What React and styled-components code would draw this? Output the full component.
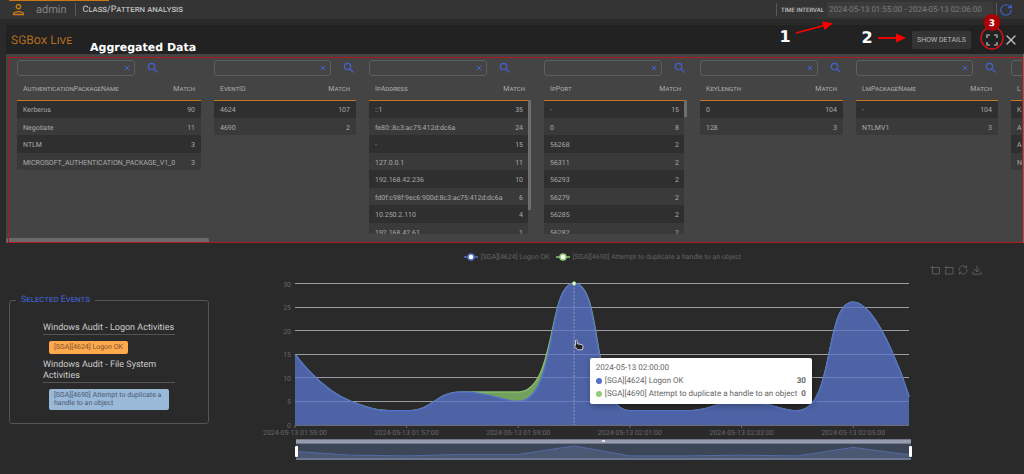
import React, { useState } from 'react';
import styled, { createGlobalStyle } from 'styled-components';
import { MdOutlinePerson, MdSearch } from 'react-icons/md';
import { RotateCw, X } from 'lucide-react';

const columns = [
    { name: 'AuthenticationPackageName', width: 184, rows: [['Kerberos', 90], ['Negotiate', 11], ['NTLM', 3], ['MICROSOFT_AUTHENTICATION_PACKAGE_V1_0', 3]] },
    { name: 'EventID', width: 142, rows: [['4624', 107], ['4690', 2]] },
    {
        name: 'IpAddress', width: 162, thumb: 110,
        rows: [['::1', 35], ['fe80::8c3:ac75:412d:dc6a', 24], ['-', 15], ['127.0.0.1', 11], ['192.168.42.236', 10], ['fd0f:c98f:9ec6:900d:8c3:ac75:412d:dc6a', 6], ['10.250.2.110', 4], ['192.168.42.61', 1]],
    },
    {
        name: 'IpPort', width: 143, thumb: 17,
        rows: [['-', 15], ['0', 8], ['56268', 2], ['56311', 2], ['56293', 2], ['56279', 2], ['56285', 2], ['56282', 2]],
    },
    { name: 'KeyLength', width: 143, rows: [['0', 104], ['128', 3]] },
    { name: 'LmPackageName', width: 142, rows: [['-', 104], ['NTLMV1', 3]] },
    { name: 'L', width: 142, rows: [['K', ''], ['A', ''], ['A', ''], ['N', '']] },
]

const logonValues = [15, 5, 3, 7, 5, 30, 3, 3, 5, 3, 26, 6]
const totalValues = [15, 5, 3, 7, 7, 30, 3, 3, 5, 3, 26, 6]
const timeLabels = ['2024-05-13 01:55:00', '2024-05-13 01:57:00', '2024-05-13 01:59:00', '2024-05-13 02:01:00', '2024-05-13 02:03:00', '2024-05-13 02:05:00']

// plot area inside the 804x198 viewBox
const LEFT = 75;
const RIGHT = 689;
const BASE = 149;
const STEP = (RIGHT - LEFT) / 11;
const UNIT = 141.5 / 30;

const toPoints = (values, unit, base) => values.map((v, i) => [LEFT + i * STEP, base - v * unit]);
const gridY = (v) => Math.floor(BASE - v * UNIT) + 0.5;

const clamp = (v, a, b) => Math.max(Math.min(v, Math.max(a, b)), Math.min(a, b));

// smooth line whose control points never leave the box of their segment
function smoothPath(points) {
    let d = `M${points[0][0]},${points[0][1]}`;
    let out = points[0];
    for (let i = 1; i < points.length; i++) {
        const [x, y] = points[i];
        const prev = points[i - 1];
        const next = points[i + 1];
        let cp = [x, y];
        let nextOut = [x, y];
        if (next) {
            const lenPrev = Math.hypot(x - prev[0], y - prev[1]);
            const lenNext = Math.hypot(next[0] - x, next[1] - y);
            const ratio = lenNext / (lenPrev + lenNext);
            nextOut = [0, 1].map((k) => clamp(points[i][k] + (next[k] - prev[k]) * 0.5 * ratio, points[i][k], next[k]));
            cp = [0, 1].map((k) => clamp(points[i][k] - (nextOut[k] - points[i][k]) * lenPrev / lenNext, prev[k], points[i][k]));
            nextOut = [0, 1].map((k) => points[i][k] + (points[i][k] - cp[k]) * lenNext / lenPrev);
        }
        d += ` C${out[0]},${out[1]} ${cp[0]},${cp[1]} ${x},${y}`;
        out = nextOut;
    }
    return d;
}

function EventsChart() {
    const logon = smoothPath(toPoints(logonValues, UNIT, BASE));
    const total = smoothPath(toPoints(totalValues, UNIT, BASE));
    const overview = toPoints(totalValues, 0.37, 181).map((p) => p.join(',')).join(' L');
    const peak = LEFT + 5 * STEP;

    return (
        <ChartSvg viewBox="0 0 804 198" role="img" aria-label="Events over time">
            {[0, 5, 10, 15, 20, 25, 30].map((v) => (
                <g key={v}>
                    <line x1={LEFT} x2={RIGHT} y1={gridY(v)} y2={gridY(v)} stroke={v ? '#9c9ca4' : '#6b6b73'} />
                    <text x="71" y={BASE - v * UNIT + 3} textAnchor="end">{v}</text>
                </g>
            ))}
            <path d={`${total} V${BASE} H${LEFT} Z`} fill="#73a05f" />
            <path d={total} fill="none" stroke="#86bb6c" strokeWidth="1.5" />
            <path d={`${logon} V${BASE} H${LEFT} Z`} fill="#4d63a6" />
            <path d={logon} fill="none" stroke="#5470c6" strokeWidth="1.5" />
            {/* the grid shows faintly through the filled area */}
            <clipPath id="area"><path d={`${logon} V${BASE} H${LEFT} Z`} /></clipPath>
            <g clipPath="url(#area)" stroke="#7e8fcc" strokeOpacity="0.6">
                {[5, 10, 15, 20, 25].map((v) => (
                    <line key={v} x1={LEFT} x2={RIGHT} y1={gridY(v)} y2={gridY(v)} />
                ))}
            </g>
            <line x1={peak} x2={peak} y1="8" y2={BASE} stroke="#8e98b8" strokeDasharray="2 1.5" />
            <circle cx={peak} cy="7.5" r="1.8" fill="#fff" stroke="#91cc75" />
            {timeLabels.map((label, i) => (
                <g key={label}>
                    <line x1={LEFT + i * 2 * STEP} x2={LEFT + i * 2 * STEP} y1="149" y2="152" stroke="#6b6b73" />
                    <text x={LEFT + i * 2 * STEP} y="159" textAnchor="middle">{label}</text>
                </g>
            ))}
            <path d="M355.500 64.500q1-1 1.700.2v3l4.800 1q1.200.4 1 1.800l-.7 3.300h-4.600l-3.400-3.800q.2-1 1.200-.6Z" fill="#222" stroke="#eee" strokeWidth="0.8" />
            <rect x="76" y="163" width="615" height="21" fill="#3d4656" />
            <path d={`M${overview} V182 H${LEFT + 1} Z`} fill="#4b5873" />
            <path d={`M${overview}`} fill="none" stroke="#536ba4" />
            <rect x="76" y="163" width="615" height="5" fill="#979dad" />
            <rect x="76" y="163" width="615" height="1" fill="#70788a" />
            <rect x="76" y="167" width="615" height="1" fill="#737b91" />
            <rect x="382" y="164" width="3" height="2" fill="#e4e6ea" />
            <rect x="76" y="182" width="615" height="2" fill="#6a758f" />
            <rect x="75" y="170" width="3" height="11" rx="1" fill="#fff" />
            <rect x="689" y="170" width="3" height="11" rx="1" fill="#fff" />
        </ChartSvg>
    )
}

function ValueColumn({ name, width, rows, thumb }) {
    const [query, setQuery] = useState('')

    return (
        <Column $width={width}>
            <SearchRow>
                <SearchField>
                    <SearchInput aria-label={`Filter ${name}`} value={query} onChange={(e) => setQuery(e.target.value)} />
                    <ClearButton aria-label={`Clear ${name}`} onClick={() => setQuery('')}><X size={8} strokeWidth={3} /></ClearButton>
                </SearchField>
                <IconButton aria-label={`Search ${name}`}><MdSearch size={14} /></IconButton>
            </SearchRow>
            <TableClip>
                <ValueTable $scroll={!!thumb}>
                    <thead>
                        <tr><th>{name}</th><th>Match</th></tr>
                    </thead>
                    <tbody>
                        {rows.map(([value, match], i) => (
                            <tr key={i}><td>{value}</td><td>{match}</td></tr>
                        ))}
                    </tbody>
                </ValueTable>
                {thumb && <Track><Thumb $size={thumb} /></Track>}
            </TableClip>
        </Column>
    )
}

function App() {
    const [interval, setInterval] = useState('2024-05-13 01:55:00 - 2024-05-13 02:06:00')

    return (
        <Page>
            <GlobalStyle />
            <TopBar>
                <ActiveTab />
                <MdOutlinePerson size={17} color="#c87814" />
                <UserName>admin</UserName>
                <Divider />
                <Crumb>Class/Pattern analysis</Crumb>
                <Spacer />
                <Divider />
                <IntervalLabel htmlFor="interval">TIME INTERVAL</IntervalLabel>
                <IntervalInput id="interval" value={interval} onChange={(e) => setInterval(e.target.value)} />
                <Divider />
                <IconButton aria-label="Refresh"><RotateCw size={14} strokeWidth={2} /></IconButton>
            </TopBar>
            <TitleBar>
                <Title>SGBox Live</Title>
                <Caption>Aggregated Data</Caption>
                <Spacer />
                <DetailsButton>SHOW DETAILS</DetailsButton>
                <WindowButton aria-label="Full screen">
                    <svg width="12" height="12" viewBox="0 0 12 12" fill="none" stroke="currentColor" strokeWidth="1.2">
                        <path d="M1 4V1h3M8 1h3v3M11 8v3H8M4 11H1V8" />
                    </svg>
                </WindowButton>
                <WindowButton aria-label="Close"><X size={16} strokeWidth={1.8} /></WindowButton>
                <Marks>
                    <svg width="260" height="60" viewBox="0 0 260 60">
                        <g stroke="red" fill="red" strokeWidth="1.8">
                            <path d="M32 33L60 25.500" />
                            <path d="M69 23.200L60.500 30L58 21.500Z" strokeWidth="0" />
                            <path d="M114 38H134" />
                            <path d="M142 38L132 42.500V33.500Z" strokeWidth="0" />
                        </g>
                        <circle cx="228" cy="38" r="11" fill="none" stroke="#d5121a" strokeWidth="1.4" />
                        <circle cx="228" cy="22.500" r="8.500" fill="#a80206" />
                        <g fill="#fff" fontFamily="DejaVu Sans, sans-serif" fontWeight="700" textAnchor="middle">
                            <text x="21" y="42" fontSize="16">1</text>
                            <text x="103" y="43" fontSize="16">2</text>
                            <text x="228" y="26" fontSize="9">3</text>
                        </g>
                    </svg>
                </Marks>
            </TitleBar>
            <DataPanel>
                <Columns>
                    {columns.map((column) => <ValueColumn key={column.name} {...column} />)}
                </Columns>
                <ScrollBar />
                <RedFrame />
            </DataPanel>
            <Lower>
                <Sidebar>
                    <Events>
                        <legend>Selected Events</legend>
                        <EventName>Windows Audit - Logon Activities</EventName>
                        <Tag $color="#ffa94d" $ink="#7a5230">[SGA][4624] Logon OK</Tag>
                        <EventName>Windows Audit - File System Activities</EventName>
                        <Tag $color="#9ab8d8" $ink="#4a5a70">[SGA][4690] Attempt to duplicate a handle to an object</Tag>
                    </Events>
                </Sidebar>
                <ChartArea>
                    <Legend>
                        <LegendItem><Marker color="#5470c6" />[SGA][4624] Logon OK</LegendItem>
                        <LegendItem><Marker color="#91cc75" />[SGA][4690] Attempt to duplicate a handle to an object</LegendItem>
                    </Legend>
                    <Toolbox>
                        <ToolButton aria-label="Zoom"><svg viewBox="0 0 10 10"><path d="M2.500 0.500V9H9.500V2.500H0.500" /></svg></ToolButton>
                        <ToolButton aria-label="Zoom back"><svg viewBox="0 0 10 10"><path d="M1.500 5V9H9V2.500H1M3 0.500L1 2.500L3 4.500" /></svg></ToolButton>
                        <ToolButton aria-label="Restore"><svg viewBox="0 0 10 10"><path d="M1 5.500A4 4 0 0 1 8 2.300M9 4.500A4 4 0 0 1 2 7.700M8.500 0.500V2.800H6.500M1.500 9.500V7.200H3.500" /></svg></ToolButton>
                        <ToolButton aria-label="Save image"><svg viewBox="0 0 10 10"><path d="M5 0.500V7M2 4L5 7L8 4M0.800 6.500V9.200H9.200V6.500" /></svg></ToolButton>
                    </Toolbox>
                    <EventsChart />
                    <Tooltip>
                        <span>2024-05-13 02:00:00</span>
                        <TooltipRow><Dot $color="#5470c6" />[SGA][4624] Logon OK<b>30</b></TooltipRow>
                        <TooltipRow><Dot $color="#91cc75" />[SGA][4690] Attempt to duplicate a handle to an object<b>0</b></TooltipRow>
                    </Tooltip>
                </ChartArea>
            </Lower>
        </Page>
    )
}

const Marker = ({ color }) => (
    <svg width="14" height="8" viewBox="0 0 14 8">
        <path d="M0 4H14" stroke={color} strokeWidth="1.5" />
        <circle cx="7" cy="4" r="3" fill="#fff" stroke={color} strokeWidth="1.5" />
    </svg>
)

const GlobalStyle = createGlobalStyle`
    * { box-sizing: border-box; }
    body {
        margin: 0;
        background: #2a2a2a;
        color: #b4b4b4;
        font-family: Roboto, sans-serif;
        font-size: 7px;
        text-rendering: geometricPrecision;
        overflow: hidden;
    }
    button, input { font: inherit; color: inherit; text-rendering: inherit; border: 0; padding: 0; margin: 0; background: none; }
`
const Page = styled.div`
    min-height: 100vh;
    overflow: hidden;
`
const TopBar = styled.header`
    position: relative;
    display: flex;
    align-items: center;
    height: 19px;
    padding: 0 11px 0 10px;
    background: #343434;
`
const ActiveTab = styled.div`
    position: absolute;
    top: 0;
    left: 9px;
    width: 100px;
    height: 1px;
    background: #c87814;
`
const UserName = styled.span`
    margin: 0 8px 0 9px;
    font-size: 11px;
    color: #858585;
`
const Divider = styled.div`
    width: 1px;
    height: 13px;
    background: #5a5a5a;
`
const Crumb = styled.span`
    margin-left: 7px;
    font-size: 9px;
    font-variant: small-caps;
    color: #d0d0d0;
`
const Spacer = styled.div`
    flex: 1;
`
const IntervalLabel = styled.label`
    margin: 2px 3px 0 4px;
    font-size: 6px;
    font-weight: 500;
    color: #c0c0c0;
`
const IntervalInput = styled.input`
    width: 166px;
    height: 15px;
    margin-right: 3px;
    padding: 0 2px;
    border-radius: 2px;
    background: #3c3c3c;
    color: #7c7c7c;
    font-size: 8px;
`
const IconButton = styled.button`
    display: flex;
    margin-left: 2px;
    color: #4263d0;
`
const TitleBar = styled.div`
    position: relative;
    display: flex;
    align-items: center;
    height: 29px;
    margin: 6px 0 0 6px;
    padding: 0 4px 0 5px;
    background: #222;
`
const Title = styled.h1`
    margin: 0;
    font-size: 12px;
    font-weight: 400;
    font-variant: small-caps;
    color: #b06c1e;
`
const Caption = styled.strong`
    margin: 16px 0 0 18px;
    line-height: 12px;
    font-family: 'DejaVu Sans', sans-serif;
    font-size: 11px;
    color: #fff;
`
const DetailsButton = styled.button`
    width: 59px;
    height: 18px;
    margin-right: 11px;
    border-radius: 2px;
    background: #343434;
    color: #b8b8b8;
`
const WindowButton = styled.button`
    display: flex;
    justify-content: center;
    width: 19px;
    color: #c4c4c4;
`
/* numbered callouts drawn over the two bars */
const Marks = styled.div`
    position: absolute;
    top: -25px;
    right: 0;
    height: 60px;
    pointer-events: none;
`
const DataPanel = styled.section`
    position: relative;
    margin-left: 6px;
    padding-top: 6px;
    border-right: 1px solid #6a6a6a;
    background: #444;
    overflow: hidden;
`
const Columns = styled.div`
    display: flex;
    gap: 13px;
    padding: 0 0 4px 11px;
`
const Column = styled.div`
    flex: 0 0 ${(p) => p.$width}px;
    width: ${(p) => p.$width}px;
`
const SearchRow = styled.div`
    display: flex;
    align-items: center;
    gap: 9px;
    height: 16px;
`
const SearchField = styled.div`
    display: flex;
    align-items: center;
    width: 118px;
    height: 16px;
    padding-right: 3px;
    border: 1px solid #5e5e5e;
    border-radius: 3px;
`
const SearchInput = styled.input`
    flex: 1;
    min-width: 0;
    height: 14px;
    padding-left: 5px;
`
const ClearButton = styled.button`
    display: flex;
    color: #4263d0;
`
const TableClip = styled.div`
    position: relative;
    height: 158px;
    overflow: hidden;
`
const ValueTable = styled.table`
    width: 100%;
    table-layout: fixed;
    border-collapse: collapse;
    color: #aaa;

    th {
        height: 24px;
        padding: 3px 0 0 6px;
        border-bottom: 1px solid #c8781e;
        font-size: 7px;
        font-weight: 400;
        font-variant: small-caps;
        text-align: left;
    }
    td {
        height: 18px;
        padding: 2px 0 0 6px;
        background: #2f2f2f;
        white-space: nowrap;
    }
    tr:nth-child(even) td {
        height: 17px;
        background: #3a3a3a;
    }
    th:last-child {
        width: 36px;
        padding-right: 6px;
    }
    th:last-child, td:last-child { text-align: right; }
    td:last-child { padding-right: ${(p) => (p.$scroll ? 8 : 6)}px; }
`
const Track = styled.div`
    position: absolute;
    top: 24px;
    right: 0;
    bottom: 0;
    width: 3px;
    background: #444;
`
const Thumb = styled.div`
    height: ${(p) => p.$size}px;
    background: #6e6e6e;
`
const ScrollBar = styled.div`
    width: 20%;
    height: 5px;
    border-radius: 2px;
    background: #6a6a6a;
`
const RedFrame = styled.div`
    position: absolute;
    inset: 3px 0 0 2px;
    border: 1px solid #b0181c;
    pointer-events: none;
`
const Lower = styled.main`
    display: flex;
`
const Sidebar = styled.aside`
    flex: 0 0 220px;
    padding: 51px 11px 0 9px;
`
const Events = styled.fieldset`
    margin: 0;
    padding: 17px 33px 7px;
    border: 1px solid #555;
    border-radius: 3px;

    legend {
        margin-left: -27px;
        padding: 0 5px;
        line-height: 12px;
        font-size: 9px;
        font-variant: small-caps;
        color: #4263d0;
    }
`
const EventName = styled.div`
    border-bottom: 1px solid #555;
    line-height: 11px;
    font-size: 9px;
    color: #ccc;
`
const Tag = styled.div`
    width: fit-content;
    margin: 6px;
    padding: 2px 5px 3px;
    border-radius: 2px;
    background: ${(p) => p.$color};
    line-height: 8px;
    color: ${(p) => p.$ink};
`
const ChartArea = styled.section`
    position: relative;
    flex: 1;
    padding-top: 9px;
`
const Legend = styled.div`
    display: flex;
    justify-content: center;
    gap: 6px;
    height: 10px;
    padding-right: 39px;
    color: #626262;
`
const LegendItem = styled.span`
    display: flex;
    align-items: center;
    gap: 3px;
`
const Toolbox = styled.div`
    display: flex;
    justify-content: flex-end;
    gap: 4px;
    height: 14px;
    padding: 3px 42px 0 0;
`
const ToolButton = styled.button`
    width: 10px;
    height: 10px;

    svg {
        display: block;
        fill: none;
        stroke: #5c5c5c;
    }
`
const ChartSvg = styled.svg`
    display: block;
    width: 100%;

    text {
        fill: #68686c;
        font-size: 7px;
    }
`
const Tooltip = styled.div`
    position: absolute;
    top: 115px;
    left: 46%;
    display: flex;
    flex-direction: column;
    gap: 3px;
    width: 222px;
    padding: 5px 6px;
    border-radius: 2px;
    background: #fff;
    box-shadow: 1px 2px 6px rgba(0, 0, 0, 0.3);
    line-height: 10px;
    font-size: 8px;
    color: #666;
`
const TooltipRow = styled.div`
    display: flex;
    align-items: center;
    white-space: nowrap;

    b { margin-left: auto; }
`
const Dot = styled.i`
    width: 6px;
    height: 6px;
    margin-right: 3px;
    border-radius: 50%;
    background: ${(p) => p.$color};
`

export default App
